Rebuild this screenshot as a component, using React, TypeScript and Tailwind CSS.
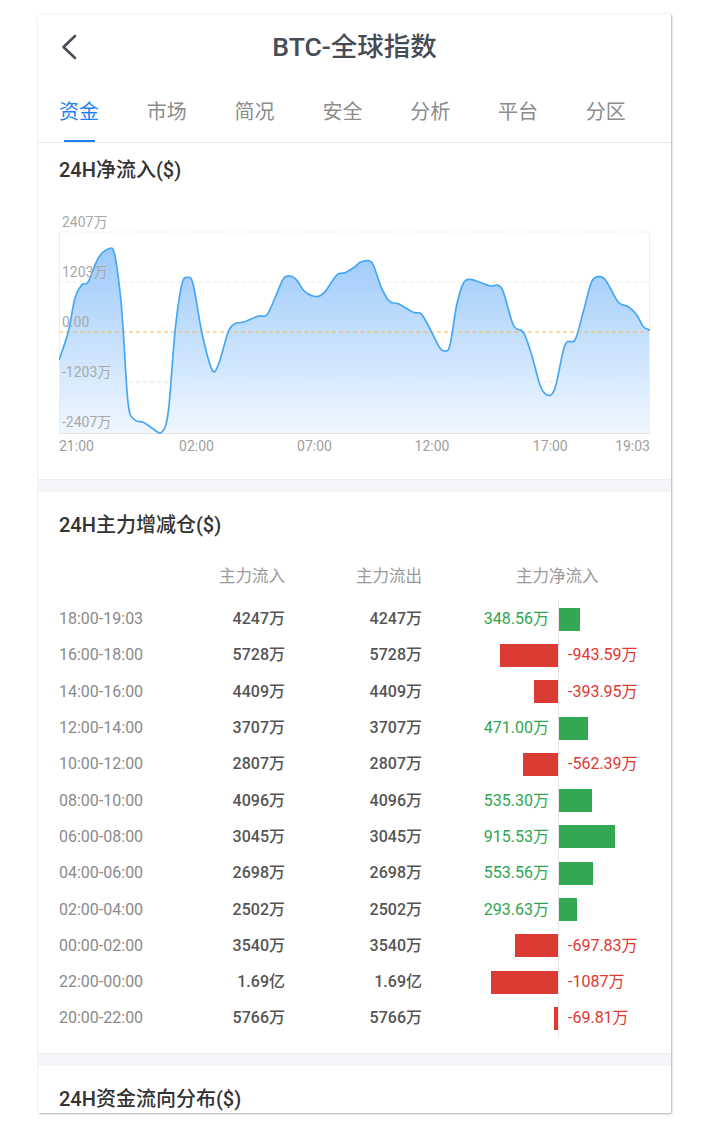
import React from "react";

type Pt = [number, number];

const RAW: Pt[] = [
  [59, 360], [68.3, 331.7], [75, 298], [81.7, 285], [88.3, 281.7], [98.3, 258], [108.3, 249], [114.3, 253],
  [120, 291.7], [123.3, 331.7], [128.3, 405], [135, 420], [143.3, 422.3], [153.3, 429], [161.7, 432.3],
  [168.3, 411.7], [175, 331.7], [181.7, 285], [187.7, 277.3], [193.3, 285], [201.7, 331.7], [211.7, 369],
  [218.3, 365], [228.3, 331.7], [235, 323.7], [245, 321.7], [258.3, 316], [266.7, 315], [275, 298],
  [283.3, 279], [290, 276], [296.7, 280], [305, 291.7], [316.7, 296.7], [325, 291.7], [336.7, 275],
  [345, 272.7], [355, 266.7], [360, 262.3], [368.3, 260.7], [373.3, 265], [381.7, 288.3], [390, 301.7],
  [398.3, 303.7], [413.3, 312.3], [421.7, 314.3], [431.7, 332.3], [440, 348.3], [445, 351], [450, 345],
  [456.7, 305], [463.3, 283.3], [470, 279.3], [480, 282.3], [490, 286], [501.7, 288.3], [513.3, 325],
  [523.3, 332.3], [531.7, 355], [540, 385], [547.3, 395], [555, 388.3], [565, 345], [575, 340],
  [583.3, 311.7], [591.7, 281.7], [600, 276.7], [606.7, 281.7], [618.3, 302.3], [628.3, 306.7],
  [636.7, 315], [643.3, 326.7], [650, 330],
];

const PTS: Pt[] = RAW.map(([x, y]) => [x - 59, y - 205]);

function smooth(p: Pt[]): string {
  let d = `M${p[0][0].toFixed(2)},${p[0][1].toFixed(2)}`;
  for (let i = 0; i < p.length - 1; i++) {
    const p0 = p[i - 1] ?? p[i];
    const p1 = p[i];
    const p2 = p[i + 1];
    const p3 = p[i + 2] ?? p2;
    const c1x = p1[0] + (p2[0] - p0[0]) / 6;
    const c1y = p1[1] + (p2[1] - p0[1]) / 6;
    const c2x = p2[0] - (p3[0] - p1[0]) / 6;
    const c2y = p2[1] - (p3[1] - p1[1]) / 6;
    d += ` C${c1x.toFixed(2)},${c1y.toFixed(2)} ${c2x.toFixed(2)},${c2y.toFixed(2)} ${p2[0].toFixed(2)},${p2[1].toFixed(2)}`;
  }
  return d;
}

const LINE = smooth(PTS);
const AREA = `${LINE} L${PTS[PTS.length - 1][0]},228 L${PTS[0][0]},228 Z`;

const ROWS: { t: string; a: string; b: string; v: number; label: string }[] = [
  { t: "18:00-19:03", a: "4247万", b: "4247万", v: 348.56, label: "348.56万" },
  { t: "16:00-18:00", a: "5728万", b: "5728万", v: -943.59, label: "-943.59万" },
  { t: "14:00-16:00", a: "4409万", b: "4409万", v: -393.95, label: "-393.95万" },
  { t: "12:00-14:00", a: "3707万", b: "3707万", v: 471.0, label: "471.00万" },
  { t: "10:00-12:00", a: "2807万", b: "2807万", v: -562.39, label: "-562.39万" },
  { t: "08:00-10:00", a: "4096万", b: "4096万", v: 535.3, label: "535.30万" },
  { t: "06:00-08:00", a: "3045万", b: "3045万", v: 915.53, label: "915.53万" },
  { t: "04:00-06:00", a: "2698万", b: "2698万", v: 553.56, label: "553.56万" },
  { t: "02:00-04:00", a: "2502万", b: "2502万", v: 293.63, label: "293.63万" },
  { t: "00:00-02:00", a: "3540万", b: "3540万", v: -697.83, label: "-697.83万" },
  { t: "22:00-00:00", a: "1.69亿", b: "1.69亿", v: -1087, label: "-1087万" },
  { t: "20:00-22:00", a: "5766万", b: "5766万", v: -69.81, label: "-69.81万" },
];

const SCALE = 0.0615;

const TABS = ["资金", "市场", "简况", "安全", "分析", "平台", "分区"];

function Band() {
  return <div className="h-[13px] bg-[#f4f5f8] border-t border-[#eceef2]" />;
}

function SectionTitle({ children }: { children: React.ReactNode }) {
  return <div className="text-[20px] leading-[26px] font-medium text-[#333] whitespace-nowrap">{children}</div>;
}

function Chart() {
  const yLabels = [
    { t: "2407万", y: 16.5 },
    { t: "1203万", y: 66.7 },
    { t: "0.00", y: 116.5 },
    { t: "-1203万", y: 166.7 },
    { t: "-2407万", y: 217.3 },
  ];
  const xLabels = [
    { t: "21:00", x: 0, align: "left" },
    { t: "02:00", x: 137.5, align: "center" },
    { t: "07:00", x: 255.5, align: "center" },
    { t: "12:00", x: 373, align: "center" },
    { t: "17:00", x: 491.3, align: "center" },
  ];
  return (
    <div className="relative w-[591px] h-[255px] mt-[22px]">
      <svg width="591" height="255" viewBox="0 0 591 255" className="block">
        <defs>
          <linearGradient id="fillg" x1="0" y1="27" x2="0" y2="228" gradientUnits="userSpaceOnUse">
            <stop offset="0" stopColor="#95c6fa" />
            <stop offset="1" stopColor="#f0f7ff" />
          </linearGradient>
        </defs>
        <line x1="0" y1="27" x2="591" y2="27" stroke="#ececec" strokeWidth="1" strokeDasharray="4 3" />
        <line x1="0" y1="77" x2="591" y2="77" stroke="#ececec" strokeWidth="1" strokeDasharray="4 3" />
        <line x1="0" y1="177" x2="591" y2="177" stroke="#ececec" strokeWidth="1" strokeDasharray="4 3" />
        <path d={AREA} fill="url(#fillg)" />
        <line x1="0" y1="177" x2="591" y2="177" stroke="#e4ecf5" strokeWidth="1" strokeDasharray="4 3" />
        <line x1="0" y1="127" x2="591" y2="127" stroke="#f6b74c" strokeWidth="1.2" strokeDasharray="4 3" />
        <line x1="0.5" y1="27" x2="0.5" y2="228" stroke="#ececec" strokeWidth="1" />
        <line x1="590.5" y1="27" x2="590.5" y2="228" stroke="#f0f0f0" strokeWidth="1" />
        <line x1="0" y1="228.5" x2="591" y2="228.5" stroke="#e6e6e6" strokeWidth="1" />
        <path d={LINE} fill="none" stroke="#46a8f5" strokeWidth="1.7" strokeLinejoin="round" />
      </svg>
      {yLabels.map((l) => (
        <div
          key={l.t}
          className="absolute left-[3px] h-[18px] -mt-[9px] text-[14px] leading-[18px] text-[#a8a8a8] whitespace-nowrap"
          style={{ top: l.y }}
        >
          {l.t}
        </div>
      ))}
      {xLabels.map((l) => (
        <div
          key={l.t}
          className={
            l.align === "left"
              ? "absolute top-[232px] text-[14px] leading-[18px] text-[#9e9e9e]"
              : "absolute top-[232px] text-[14px] leading-[18px] text-[#9e9e9e] -translate-x-1/2"
          }
          style={{ left: l.x }}
        >
          {l.t}
        </div>
      ))}
      <div className="absolute top-[232px] right-0 text-[14px] leading-[18px] text-[#9e9e9e]">19:03</div>
    </div>
  );
}

export default function App() {
  return (
    <div className="w-[722px] min-h-[1121px] bg-white pt-[14px] [font-family:Roboto,'Noto_Sans_CJK_SC',sans-serif]">
      <div className="ml-[38px] w-[633px] h-[1099px] overflow-hidden bg-white shadow-[1px_1px_2px_rgba(0,0,0,0.28),0_0_1px_rgba(0,0,0,0.18)]">
        {/* header */}
        <div className="grid grid-cols-[1fr_auto_1fr] items-center h-[66px]">
          <div className="pl-[23px] flex items-center">
            <svg width="16" height="26" viewBox="0 0 16 26" fill="none">
              <path d="M14 2 L2.5 13 L14 24" stroke="#474e58" strokeWidth="2.6" strokeLinecap="round" strokeLinejoin="round" />
            </svg>
          </div>
          <div className="text-[26.5px] leading-[34px] font-medium text-[#454c56] whitespace-nowrap">BTC-全球指数</div>
          <div />
        </div>
        {/* tabs */}
        <div className="h-[63px] border-b border-[#e7e9ee] pl-[21px] flex gap-[47.8px]">
          {TABS.map((t, i) => (
            <div key={t} className="w-[40px] h-[62px] flex flex-col items-center pt-[18px]">
              <div
                className={
                  i === 0
                    ? "text-[20px] leading-[28px] text-[#1f80f2] whitespace-nowrap"
                    : "text-[20px] leading-[28px] text-[#8c8c8c] whitespace-nowrap"
                }
              >
                {t}
              </div>
              <div className={i === 0 ? "mt-auto w-[31px] h-[2px] bg-[#1f80f2]" : "mt-auto w-[31px] h-[2px]"} />
            </div>
          ))}
        </div>
        {/* section 1 */}
        <div className="px-[21px] pt-[14px] pb-[19px]">
          <SectionTitle>24H净流入($)</SectionTitle>
          <Chart />
        </div>
        <Band />
        {/* section 2 */}
        <div className="px-[21px] pt-[20px] pb-[16px]">
          <SectionTitle>24H主力增减仓($)</SectionTitle>
          <div className="mt-[19px] h-[40px] flex items-center text-[16.5px] text-[#9a9a9a] whitespace-nowrap">
            <div className="w-[226px] text-right">主力流入</div>
            <div className="w-[137px] text-right">主力流出</div>
            <div className="flex-1 pl-[94px]">主力净流入</div>
          </div>
          <div className="mt-[4px]">
            {ROWS.map((r) => {
              const w = Math.abs(r.v) * SCALE;
              const pos = r.v >= 0;
              return (
                <div key={r.t} className="h-[36.3px] flex items-center whitespace-nowrap">
                  <div className="w-[140px] text-[16px] text-[#8a8a8a]">{r.t}</div>
                  <div className="w-[86px] text-right text-[16px] font-medium text-[#555]">{r.a}</div>
                  <div className="w-[137px] text-right text-[16px] font-medium text-[#555]">{r.b}</div>
                  <div className="w-[136px] h-full flex items-center justify-end">
                    {pos ? (
                      <span className="mr-[9px] text-[16px] text-[#2ea64f]">{r.label}</span>
                    ) : (
                      <div className="h-[23px] bg-[#db3b33]" style={{ width: w }} />
                    )}
                  </div>
                  <div className="flex-1 h-full border-l border-[#e6e6e6] flex items-center">
                    {pos ? (
                      <div className="h-[23px] bg-[#33a853]" style={{ width: w }} />
                    ) : (
                      <span className="pl-[9px] text-[16px] text-[#e0382f]">{r.label}</span>
                    )}
                  </div>
                </div>
              );
            })}
          </div>
        </div>
        <Band />
        {/* section 3 */}
        <div className="px-[21px] pt-[20px]">
          <SectionTitle>24H资金流向分布($)</SectionTitle>
        </div>
      </div>
    </div>
  );
}
